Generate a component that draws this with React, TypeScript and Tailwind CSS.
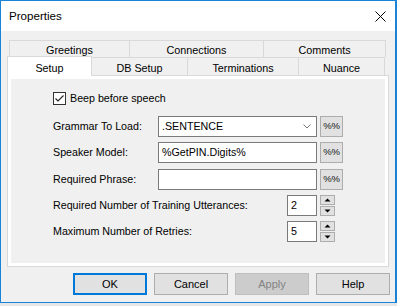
import React from "react";

const font = { fontFamily: '"Liberation Sans", Arial, sans-serif' };

function Tab({ label, w, selected }: { label: string; w: number; selected?: boolean }) {
  return (
    <div
      className={
        selected
          ? "relative z-10 flex h-[20px] items-start justify-center border-x border-t border-[#d9d9d9] bg-white pt-[3px] text-[10.8px] text-black"
          : "mt-[1px] flex h-[18px] items-center justify-center border-r border-t border-[#d9d9d9] bg-[#f0f0f0] pt-[3px] text-[10.8px] text-black"
      }
      style={{ width: w }}
    >
      {label}
    </div>
  );
}

function PctButton() {
  return (
    <div className="flex h-[21px] w-[23px] items-center justify-center border border-[#adadad] bg-[#e1e1e1] text-[9.5px] tracking-[-0.3px] text-[#111]">
      %%
    </div>
  );
}

function Spin() {
  return (
    <div className="flex h-[21px] w-[16px] flex-col justify-between">
      <div className="flex h-[10px] w-[15px] items-center justify-center border border-[#adadad] bg-[#e1e1e1]">
        <svg width="7" height="4" viewBox="0 0 7 4">
          <path d="M0.5 3.5 L3.5 0.5 L6.5 3.5 Z" fill="#000" />
        </svg>
      </div>
      <div className="flex h-[10px] w-[15px] items-center justify-center border border-[#adadad] bg-[#e1e1e1]">
        <svg width="7" height="4" viewBox="0 0 7 4">
          <path d="M0.5 0.5 L3.5 3.5 L6.5 0.5 Z" fill="#000" />
        </svg>
      </div>
    </div>
  );
}

function Btn({ label, kind }: { label: string; kind?: "default" | "disabled" }) {
  const cls =
    kind === "default"
      ? "border-2 border-[#0078d7] bg-[#e1e1e1] text-black"
      : kind === "disabled"
      ? "border border-[#bfbfbf] bg-[#cccccc] text-[#838383]"
      : "border border-[#adadad] bg-[#e1e1e1] text-black";
  return (
    <div className={`flex h-[22px] w-[74px] items-center justify-center text-[11px] ${cls}`}>{label}</div>
  );
}

export default function App() {
  return (
    <div className="h-[306px] w-[397px] bg-[#e6e6e6]" style={font}>
      <div className="flex h-[303px] w-[397px] flex-col border border-r-2 border-[#1883d7] bg-[#f0f0f0]">
        {/* title bar */}
        <div className="flex h-[30px] items-center justify-between bg-white pl-[8px] pr-[9px]">
          <span className="text-[11.6px] text-black">Properties</span>
          <svg width="11" height="11" viewBox="0 0 11 11">
            <path d="M0.5 0.5 L10.5 10.5 M10.5 0.5 L0.5 10.5" stroke="#000" strokeWidth="1" />
          </svg>
        </div>

        {/* tabs */}
        <div className="mt-[9px] flex pl-[8px]">
          <div className="flex h-[17px] border-l border-[#d9d9d9]">
            <div className="flex h-[17px] w-[120px] items-center justify-center border-r border-t border-[#d9d9d9] pt-[3px] text-[10.8px]">
              Greetings
            </div>
            <div className="flex h-[17px] w-[134px] items-center justify-center border-r border-t border-[#d9d9d9] pt-[3px] text-[10.8px]">
              Connections
            </div>
            <div className="flex h-[17px] w-[122px] items-center justify-center border-r border-t border-[#d9d9d9] pt-[3px] text-[10.8px]">
              Comments
            </div>
          </div>
        </div>
        <div className="-mt-[1px] flex h-[19px] pl-[6px]">
          <Tab label="Setup" w={85} selected />
          <Tab label="DB Setup" w={96} />
          <Tab label="Terminations" w={111} />
          <Tab label="Nuance" w={86} />
        </div>

        {/* panel */}
        <div className="ml-[6px] h-[192px] w-[382px] border border-[#d9d9d9] bg-white p-[3px]">
          <div className="flex h-full w-full flex-col bg-[#f0f0f0] pl-[42px] text-[10.7px] text-black">
            <div className="mt-[13px] flex h-[13px] items-center">
              <div className="flex h-[13px] w-[13px] items-center justify-center border border-[#333333] bg-white">
                <svg width="11" height="11" viewBox="0 0 11 11">
                  <path d="M1.5 5.5 L4 8 L9.5 2.5" stroke="#222" strokeWidth="1.1" fill="none" />
                </svg>
              </div>
              <span className="ml-[4px]">Beep before speech</span>
            </div>

            <div className="mt-[11px] flex h-[21px] items-center">
              <span className="w-[105px]">Grammar To Load:</span>
              <div className="flex h-[21px] w-[159px] items-center justify-between border border-[#7a7a7a] bg-white pl-[3px] pr-[5px]">
                <span>.SENTENCE</span>
                <svg width="8" height="5" viewBox="0 0 8 5">
                  <path d="M0.5 0.5 L4 4 L7.5 0.5" stroke="#7a7a7a" strokeWidth="1" fill="none" />
                </svg>
              </div>
              <div className="ml-[3px]">
                <PctButton />
              </div>
            </div>

            <div className="mt-[5px] flex h-[21px] items-center">
              <span className="w-[105px]">Speaker Model:</span>
              <div className="flex h-[21px] w-[159px] items-center border border-[#7a7a7a] bg-white pl-[3px]">
                %GetPIN.Digits%
              </div>
              <div className="ml-[3px]">
                <PctButton />
              </div>
            </div>

            <div className="mt-[6px] flex h-[21px] items-center">
              <span className="w-[105px]">Required Phrase:</span>
              <div className="h-[21px] w-[159px] border border-[#7a7a7a] bg-white" />
              <div className="ml-[3px]">
                <PctButton />
              </div>
            </div>

            <div className="mt-[5px] flex h-[21px] items-center">
              <span className="w-[234px]">Required Number of Training Utterances:</span>
              <div className="flex h-[21px] w-[30px] items-center border border-[#7a7a7a] bg-white pl-[3px]">2</div>
              <div className="ml-[3px]">
                <Spin />
              </div>
            </div>

            <div className="mt-[5px] flex h-[21px] items-center">
              <span className="w-[234px]">Maximum Number of Retries:</span>
              <div className="flex h-[21px] w-[30px] items-center border border-[#7a7a7a] bg-white pl-[3px]">5</div>
              <div className="ml-[3px]">
                <Spin />
              </div>
            </div>
          </div>
        </div>

        {/* buttons */}
        <div className="mt-[6px] flex gap-[7px] pl-[72px]">
          <Btn label="OK" kind="default" />
          <Btn label="Cancel" />
          <Btn label="Apply" kind="disabled" />
          <Btn label="Help" />
        </div>
      </div>
    </div>
  );
}
